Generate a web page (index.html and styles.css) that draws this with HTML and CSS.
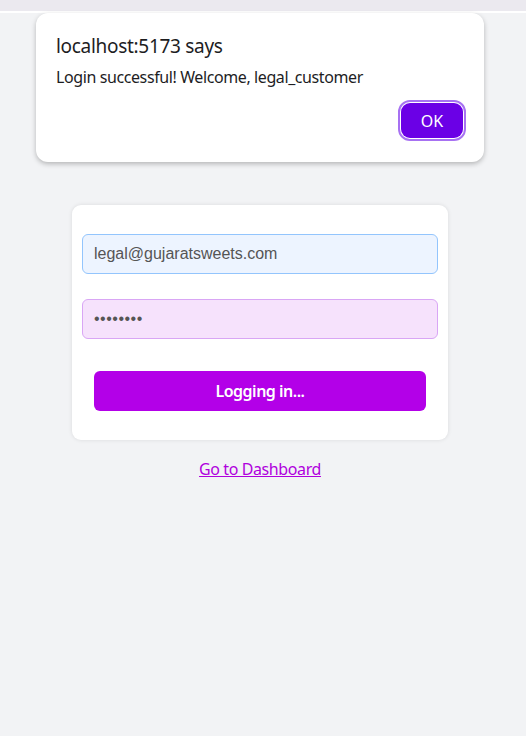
FILE: index.html
```html
<!DOCTYPE html>
<html>
<head>
<meta charset="utf-8">
<link rel="stylesheet" href="styles.css">
</head>
<body>
<div class="topbar"></div>
<main class="page">
  <form class="card">
    <input class="field email" type="text" value="legal@gujaratsweets.com">
    <input class="field pass" type="password" value="password">
    <button class="submit" type="button">Logging in...</button>
  </form>
  <a class="link" href="#">Go to Dashboard</a>
</main>
<div class="dialog">
  <div class="dlg-title">localhost:5173 says</div>
  <div class="dlg-msg">Login successful! Welcome, legal_customer</div>
  <div class="dlg-actions"><button class="ok" type="button">OK</button></div>
</div>
</body>
</html>
```
FILE: styles.css
```css
html, body { margin: 0; padding: 0; }
body {
  background: #f2f3f5;
  font-family: "Noto Sans", "Open Sans", sans-serif;
  width: 526px;
  height: 736px;
  position: relative;
  overflow: hidden;
}
.topbar {
  height: 11px;
  background: #ebe9ef;
  border-bottom: 2px solid #ffffff;
}
.page {
  display: flex;
  flex-direction: column;
  align-items: center;
  padding-top: 192px;
  padding-right: 6px;
}
.card {
  width: 376px;
  box-sizing: border-box;
  background: #fff;
  border-radius: 9px;
  box-shadow: 0 0 4px rgba(0,0,0,0.10);
  padding: 29px 10px 29px;
  display: flex;
  flex-direction: column;
}
.field {
  height: 40px;
  box-sizing: border-box;
  border-radius: 6px;
  padding: 0 11px;
  font-family: "Liberation Sans", Arial, sans-serif;
  font-size: 16px;
  color: #555;
  outline: none;
}
.email { background: #edf4ff; border: 1px solid #93c5fd; }
.pass { background: #f6e2fc; border: 1px solid #d9a6f5; margin-top: 25px; letter-spacing: 0.5px; }
.submit {
  margin: 32px 12px 0;
  height: 40px;
  border: none;
  border-radius: 6px;
  background: #b300e8;
  color: #fff;
  font-family: "Noto Sans", sans-serif;
  font-weight: 600;
  font-size: 16px;
  letter-spacing: -0.5px;
}
.link {
  margin-top: 18px;
  color: #b000dd;
  font-size: 16px;
  letter-spacing: -0.4px;
  text-decoration: underline;
}
.dialog {
  position: absolute;
  left: 36px;
  top: 13px;
  width: 448px;
  height: 149px;
  box-sizing: border-box;
  background: #fff;
  border-radius: 12px;
  box-shadow: 0 2px 5px rgba(0,0,0,0.25);
  padding: 22px 20px 0 20px;
}
.dlg-title { font-size: 19px; letter-spacing: -0.3px; color: #1d1d1f; line-height: 22px; }
.dlg-msg { font-size: 16px; letter-spacing: -0.4px; color: #1d1d1f; margin-top: 9px; line-height: 22px; }
.dlg-actions { display: flex; justify-content: flex-end; margin-top: 15px; }
.ok {
  width: 62px;
  height: 35px;
  margin-right: 1px;
  border: none;
  border-radius: 9px;
  background: #6b00e6;
  color: #fff;
  font-family: "Noto Sans", sans-serif;
  font-size: 16px;
  outline: 2px solid #a771f2;
  outline-offset: 1px;
  box-shadow: 0 0 0 1px #fff;
}
```
